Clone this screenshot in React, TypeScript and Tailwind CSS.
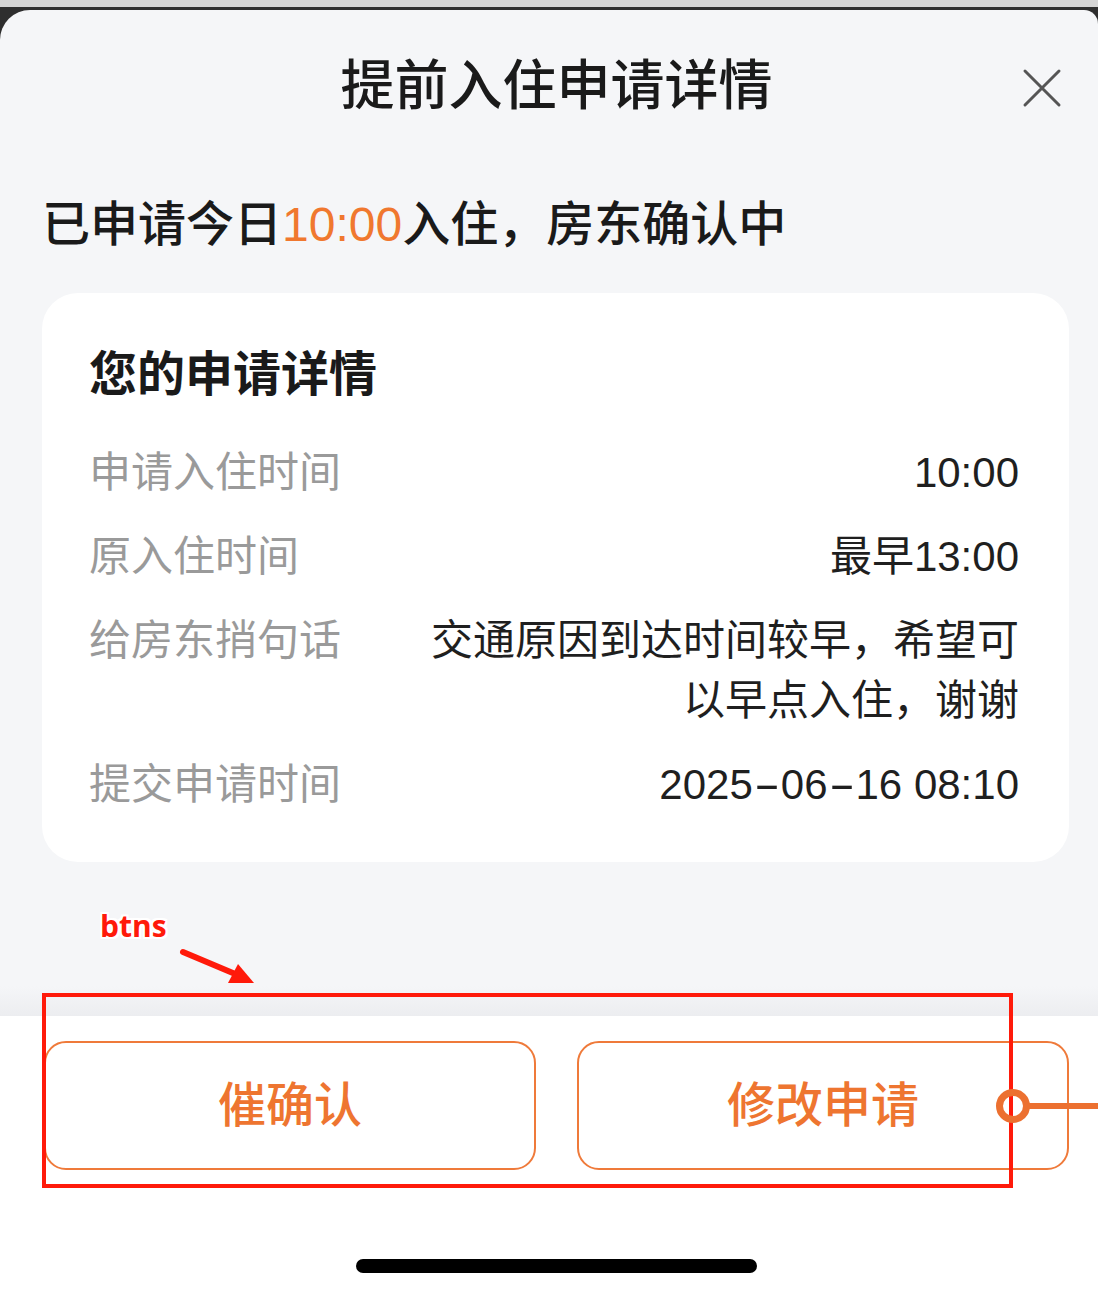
const rows = [
  { label: "申请入住时间", value: "10:00" },
  { label: "原入住时间", value: "最早13:00" },
  { label: "给房东捎句话", value: "交通原因到达时间较早，希望可以早点入住，谢谢" },
  { label: "提交申请时间", value: "2025-06-16 08:10" },
];

const font = {
  fontFamily: '"Liberation Sans", "Noto Sans CJK SC", sans-serif',
};

// hyphens in dates render wider in the design
function Value({ text }: { text: string }) {
  const parts = text.split("-");
  if (parts.length === 1) return <>{text}</>;
  return (
    <>
      {parts.map((p, i) => (
        <span key={i}>
          {i > 0 && (
            <span className="inline-block w-[28px] scale-x-[1.9] text-center">-</span>
          )}
          {p}
        </span>
      ))}
    </>
  );
}

export default function App() {
  return (
    <div
      className="relative w-full h-[1294px] overflow-hidden bg-[#d4d4d4]"
      style={font}
    >
      <div className="mt-[7px] h-[1287px] bg-[#2e2e2e] pt-[3px]">
        <div className="flex h-full flex-col overflow-hidden rounded-tl-[30px] rounded-tr-[14px] bg-[#f5f6f8]">
          {/* Header */}
          <div className="relative flex h-[152px] shrink-0 items-center justify-center pl-[15px]">
            <h1 className="text-[54px] font-medium leading-none text-[#1a1a1a]">
              提前入住申请详情
            </h1>
            <button className="absolute right-[36px] top-[58px] text-[#555]">
              <svg width="40" height="40" viewBox="0 0 40 40">
                <path
                  d="M3 3 L37 37 M37 3 L3 37"
                  stroke="currentColor"
                  strokeWidth="3"
                  strokeLinecap="round"
                />
              </svg>
            </button>
          </div>

          {/* Body */}
          <div className="pl-[42px] pr-[29px]">
            <p className="mt-[33px] text-[48px] font-medium leading-[60px] text-[#1a1a1a]">
              已申请今日<span className="text-[#f0782f]">10:00</span>入住，房东确认中
            </p>

            <div className="mt-[38px] rounded-[36px] bg-white pl-[47px] pr-[50px] pt-[52px] pb-[47px]">
              <h2 className="text-[48px] font-bold leading-[60px] text-[#1a1a1a]">
                您的申请详情
              </h2>
              <div className="mt-[38px] flex flex-col gap-[24px]">
                {rows.map((row) => (
                  <div key={row.label} className="flex">
                    <span className="w-[330px] shrink-0 text-[42px] leading-[60px] text-[#9a9a9a]">
                      {row.label}
                    </span>
                    <span className="flex-1 text-right text-[42px] leading-[60px] text-[#1f1f1f]">
                      <Value text={row.value} />
                    </span>
                  </div>
                ))}
              </div>
            </div>
          </div>

          <div className="h-[124px] shrink-0" />
          <div className="h-[30px] shrink-0 bg-linear-to-b from-[#f5f6f8] to-[#ecedf0]" />

          {/* Footer */}
          <div className="flex flex-1 flex-col bg-white pl-[44px] pr-[29px] pt-[25px]">
            <div className="flex gap-[41px]">
              <button className="flex h-[129px] flex-1 items-center justify-center rounded-[22px] border-2 border-[#ef7a3a] text-[48px] font-medium text-[#ee7530]">
                催确认
              </button>
              <button className="flex h-[129px] flex-1 items-center justify-center rounded-[22px] border-2 border-[#ef7a3a] text-[48px] font-medium text-[#ee7530]">
                修改申请
              </button>
            </div>
            <div className="mt-[89px] flex justify-center">
              <div className="h-[14px] w-[401px] rounded-full bg-black" />
            </div>
          </div>
        </div>
      </div>

      {/* Annotation overlay */}
      <div className="pointer-events-none absolute left-[42px] top-[993px] h-[195px] w-[971px] border-4 border-[#ff1a0a]" />
      <span
        className="absolute left-[100px] top-[906px] text-[30px] font-bold leading-[40px] text-[#ff1a0a]"
        style={{
          fontFamily: '"Open Sans", "Liberation Sans", sans-serif',
          textShadow:
            "2px 0 0 #fff, -2px 0 0 #fff, 0 2px 0 #fff, 0 -2px 0 #fff, 2px 2px 0 #fff, -2px -2px 0 #fff, 2px -2px 0 #fff, -2px 2px 0 #fff",
        }}
      >
        btns
      </span>
      <svg
        className="absolute left-[176px] top-[944px]"
        width="84"
        height="44"
        viewBox="0 0 84 44"
      >
        <path
          d="M7 8 L64 32"
          stroke="#ff1a0a"
          strokeWidth="6"
          strokeLinecap="round"
        />
        <path d="M78 39 L52 39 L62 20 Z" fill="#ff1a0a" />
      </svg>
      <div className="absolute left-[996px] top-[1089px] h-[34px] w-[34px] rounded-full border-[7px] border-[#ec7030] bg-transparent" />
      <div className="absolute left-[1029px] top-[1103px] h-[6px] w-[69px] bg-[#ec7030]" />
    </div>
  );
}
